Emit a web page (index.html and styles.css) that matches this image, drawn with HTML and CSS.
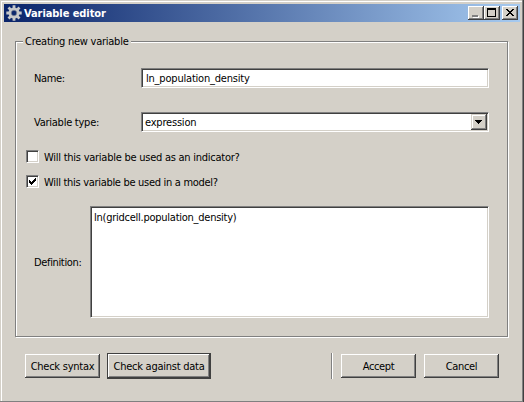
FILE: index.html
```html
<!DOCTYPE html>
<html lang="en">
<head>
<meta charset="utf-8">
<title>Variable editor</title>
<link rel="stylesheet" href="styles.css">
</head>
<body>
<main class="window">
  <header class="titlebar">
    <svg class="gear" width="16" height="16" viewBox="0 0 16 16">
      <g stroke="#c6c7c9" stroke-width="2.8">
        <path d="M8 .3v4M8 11.7v4M.3 8h4M11.7 8h4M2.5 2.5l3 3M10.5 10.5l3 3M2.5 13.5l3-3M10.5 5.5l3-3"/>
      </g>
      <circle cx="8" cy="8" r="4.1" fill="none" stroke="#c6c7c9" stroke-width="2.8"/>
      <circle cx="8" cy="8" r="2.8" fill="none" stroke="#858b99" stroke-width=".6"/>
    </svg>
    <h1 class="title"><span class="t-title">Variable editor</span></h1>
    <div class="caption-buttons">
      <div class="caption"><svg width="16" height="14" shape-rendering="crispEdges"><path d="M5 10h6v2H5z" fill="#fff"/><path d="M4 9h6v2H4z" fill="#808080"/></svg></div>
      <div class="caption"><svg width="16" height="14" shape-rendering="crispEdges"><path fill-rule="evenodd" d="M3 2h9v9H3zM4 4v6h7V4z"/></svg></div>
      <div class="caption close"><svg width="16" height="14" shape-rendering="crispEdges"><path d="M4 3h2v1h1v1h2V4h1V3h2v1h-1v1h-1v1H9v1h1v1h1v1h1v1h-2V9H9V8H7v1H6v1H4V9h1V8h1V7h1V6H6V5H5V4H4z"/></svg></div>
    </div>
  </header>
  <section class="group">
    <div class="legend"><span class="t-legend">Creating new variable</span></div>
    <div class="row name-row"><label class="label"><span class="t-name">Name:</span></label><div class="field input"><span class="t-input">ln_population_density</span></div></div>
    <div class="row"><label class="label"><span class="t-type">Variable type:</span></label><div class="field select"><span class="t-select">expression</span><div class="arrow"><svg width="16" height="16" shape-rendering="crispEdges"><path d="M4 6h7v1h-1v1H9v1H8v1H7V9H6V8H5V7H4z"/></svg></div></div></div>
    <div class="check first"><div class="box"></div><span class="t-ind">Will this variable be used as an indicator?</span></div>
    <div class="check"><div class="box"><svg width="9" height="9" shape-rendering="crispEdges"><path d="M1 3h1v1h1v1h1V4h1V3h1V2h1V1h1v3H7v1H6v1H5v1H4v1H3V7H2V6H1z"/></svg></div><span class="t-model">Will this variable be used in a model?</span></div>
    <div class="definition"><label class="label"><span class="t-def">Definition:</span></label><div class="field area"><span class="t-area">ln(gridcell.population_density)</span></div></div>
  </section>
  <footer class="actions">
    <div class="button"><span class="t-syntax">Check syntax</span></div>
    <div class="button default"><span class="t-against">Check against data</span></div>
    <div class="divider"></div>
    <div class="button"><span class="t-accept">Accept</span></div>
    <div class="button cancel"><span class="t-cancel">Cancel</span></div>
  </footer>
</main>
</body>
</html>
```
FILE: styles.css
```css
* { box-sizing: border-box; }
body { margin: 0; background: #d4d0c8; color: #000; font: 11px/14px "DejaVu Sans Condensed", "DejaVu Sans", sans-serif; font-stretch: condensed; overflow: hidden; }
svg { display: block; flex: none; }
span { display: inline-block; padding-top: 2px; line-height: 14px; letter-spacing: -.25px; white-space: nowrap; }
.window { width: 524px; height: 402px; padding: 4px 4px 0; box-shadow: inset -1px 0 #404040, inset -2px -1px #808080, inset 1px 1px #d4d0c8, inset 2px 2px #fff; }
.titlebar { display: flex; align-items: center; height: 18px; padding: 0 2px; background: linear-gradient(90deg, #0a246a, #a6caf0); color: #fff; }
.title { flex: 1; margin: 0 0 0 2px; font-size: 11px; line-height: 14px; font-weight: bold; }
.t-title { letter-spacing: -.07px; }
.caption-buttons { display: flex; }
.caption { width: 16px; height: 14px; background: #d4d0c8; box-shadow: inset -1px -1px #404040, inset 1px 1px #fff, inset -2px -2px #808080; }
.close { margin-left: 2px; }
.group { width: 493px; height: 296px; margin: 19px 0 0 11px; padding: 0 20px 0 11px; border: 1px solid #808080; box-shadow: inset 1px 1px #fff, 1px 1px #fff; }
.legend { width: 108px; height: 14px; margin: -8px 0 0 -4px; padding-left: 2px; background: #d4d0c8; }
.t-legend { padding-top: 1px; }
.row { display: flex; align-items: center; height: 20px; margin-top: 24px; padding-left: 7px; }
.name-row { margin-top: 20px; }
.label { flex: none; width: 107px; }
.t-name, .t-def, .t-accept, .t-cancel { letter-spacing: -.35px; }
.t-input, .t-select { letter-spacing: -.2px; }
.field { background: #fff; border: 1px solid; border-color: #808080 #fff #fff #808080; box-shadow: inset 1px 1px #404040, inset -1px -1px #d4d0c8; }
.input, .select { flex: none; display: flex; align-items: center; width: 348px; height: 20px; padding-left: 4px; }
.select { justify-content: space-between; padding: 0 1px 0 3px; }
.arrow { width: 16px; height: 16px; background: #d4d0c8; box-shadow: inset -1px -1px #404040, inset 1px 1px #d4d0c8, inset -2px -2px #808080, inset 2px 2px #fff; }
.check { display: flex; align-items: center; gap: 5px; height: 13px; margin-top: 12px; margin-left: -1px; }
.first { margin-top: 18px; }
.t-model { letter-spacing: -.3px; }
.box { width: 13px; height: 13px; padding: 1px; background: #fff; border: 1px solid; border-color: #808080 #fff #fff #808080; box-shadow: inset 1px 1px #404040, inset -1px -1px #d4d0c8; }
.definition { display: flex; align-items: center; height: 112px; margin-top: 18px; padding-left: 7px; }
.definition .label { width: 56px; }
.area { width: 399px; flex: none; height: 112px; padding: 3px; }
.t-area { padding-top: 1px; }
.actions { display: flex; align-items: center; height: 26px; margin: 16px 21px 0; }
.button { display: flex; justify-content: center; align-items: center; width: 75px; height: 24px; box-shadow: inset -1px -1px #404040, inset 1px 1px #fff, inset -2px -2px #808080; }
.default { width: 104px; height: 26px; margin-left: 7px; border: 1px solid #404040; }
.divider { width: 2px; height: 26px; margin: 0 8px 0 auto; background: linear-gradient(90deg, #808080 50%, #fff 50%); }
.cancel { margin-left: 8px; }
```
